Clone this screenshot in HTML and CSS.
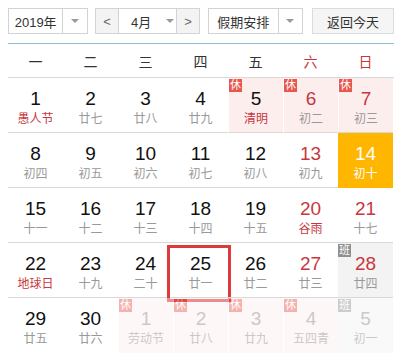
FILE: index.html
```html
<!DOCTYPE html>
<html lang="zh-CN">
<head>
<meta charset="utf-8">
<link rel="stylesheet" href="styles.css">
</head>
<body>
<div class="cal">
  <div class="toolbar">
    <div class="select year"><span class="val">2019年</span><span class="arrow"><i></i></span></div>
    <div class="month">
      <span class="nav">&lt;</span>
      <span class="mval">4月<i></i></span>
      <span class="nav">&gt;</span>
    </div>
    <div class="select holiday"><span class="val">假期安排</span><span class="arrow"><i></i></span></div>
    <div class="today-btn">返回今天</div>
  </div>
  <div class="week">
    <span>一</span><span>二</span><span>三</span><span>四</span><span>五</span><span class="red">六</span><span class="red">日</span>
  </div>
  <div class="grid">
    <div class="cell"><b>1</b><em class="hred">愚人节</em></div>
    <div class="cell"><b>2</b><em>廿七</em></div>
    <div class="cell"><b>3</b><em>廿八</em></div>
    <div class="cell"><b>4</b><em>廿九</em></div>
    <div class="cell rest"><span class="badge">休</span><b>5</b><em class="hred">清明</em></div>
    <div class="cell rest"><span class="badge">休</span><b class="red">6</b><em>初二</em></div>
    <div class="cell rest"><span class="badge">休</span><b class="red">7</b><em>初三</em></div>

    <div class="cell"><b>8</b><em>初四</em></div>
    <div class="cell"><b>9</b><em>初五</em></div>
    <div class="cell"><b>10</b><em>初六</em></div>
    <div class="cell"><b>11</b><em>初七</em></div>
    <div class="cell"><b>12</b><em>初八</em></div>
    <div class="cell"><b class="red">13</b><em>初九</em></div>
    <div class="cell sel"><b>14</b><em>初十</em></div>

    <div class="cell"><b>15</b><em>十一</em></div>
    <div class="cell"><b>16</b><em>十二</em></div>
    <div class="cell"><b>17</b><em>十三</em></div>
    <div class="cell"><b>18</b><em>十四</em></div>
    <div class="cell"><b>19</b><em>十五</em></div>
    <div class="cell"><b class="red">20</b><em class="hred">谷雨</em></div>
    <div class="cell"><b class="red">21</b><em>十七</em></div>

    <div class="cell"><b>22</b><em class="hred">地球日</em></div>
    <div class="cell"><b>23</b><em>十九</em></div>
    <div class="cell"><b>24</b><em>二十</em></div>
    <div class="cell today"><b>25</b><em>廿一</em></div>
    <div class="cell"><b>26</b><em>廿二</em></div>
    <div class="cell"><b class="red">27</b><em>廿三</em></div>
    <div class="cell work"><span class="badge grey">班</span><b class="red">28</b><em>廿四</em></div>

    <div class="cell last"><b>29</b><em>廿五</em></div>
    <div class="cell last"><b>30</b><em>廿六</em></div>
    <div class="cell last rest next"><span class="badge">休</span><b>1</b><em>劳动节</em></div>
    <div class="cell last rest next"><span class="badge">休</span><b>2</b><em>廿八</em></div>
    <div class="cell last rest next"><span class="badge">休</span><b>3</b><em>廿九</em></div>
    <div class="cell last rest next"><span class="badge">休</span><b>4</b><em>五四青</em></div>
    <div class="cell last work next"><span class="badge grey">班</span><b>5</b><em>初一</em></div>
  </div>
</div>
</body>
</html>
```

FILE: styles.css
```css
* { box-sizing: border-box; }
html, body { margin: 0; padding: 0; background: #fff; }
body {
  font-family: "Liberation Sans", "Noto Sans CJK SC", sans-serif;
  color: #333;
}
.cal { padding: 8px; width: 402px; }

.toolbar {
  display: flex;
  align-items: center;
  height: 26px;
  font-size: 13px;
}
.select {
  display: flex;
  height: 26px;
  border: 1px solid #d3d3d3;
  background: #fff;
}
.select .val {
  display: flex;
  align-items: center;
  justify-content: center;
  border-right: 1px solid #d3d3d3;
}
.select .arrow {
  width: 24px;
  display: flex;
  align-items: center;
  justify-content: center;
}
i {
  display: inline-block;
  width: 0; height: 0;
  border-left: 4px solid transparent;
  border-right: 4px solid transparent;
  border-top: 4px solid #999;
}
.year { width: 80px; }
.year .val { width: 55px; }
.month {
  display: flex;
  margin-left: 7px;
  height: 26px;
  border: 1px solid #d3d3d3;
  width: 105px;
}
.month .nav {
  width: 22px;
  background: #f3f3f3;
  display: flex;
  align-items: center;
  justify-content: center;
  color: #666;
  font-size: 13px;
}
.month .mval {
  flex: 1;
  border-left: 1px solid #d3d3d3;
  border-right: 1px solid #d3d3d3;
  display: flex;
  align-items: center;
  padding-left: 12px;
  gap: 15px;
  background: #fff;
}
.holiday { width: 95px; margin-left: 8px; }
.holiday .val { width: 71px; }
.today-btn {
  margin-left: 9px;
  width: 82px;
  height: 26px;
  border: 1px solid #dcdcdc;
  background: #f5f5f5;
  display: flex;
  align-items: center;
  justify-content: center;
}

.week {
  margin-top: 9px;
  border-top: 1px solid #8ec0d4;
  border-bottom: 1px solid #d9d9d9;
  height: 35px;
  display: grid;
  grid-template-columns: repeat(7, 55px);
  align-items: center;
  font-size: 14px;
  color: #333;
}
.week span { text-align: center; }
.week .red { color: #c8373e; }

.grid {
  position: relative;
  display: grid;
  grid-template-columns: repeat(7, 55px);
  grid-auto-rows: 55px;
}
.cell {
  position: relative;
  border-bottom: 1px solid #d9d9d9;
  display: flex;
  flex-direction: column;
  align-items: center;
  padding-top: 10px;
}
.cell.last { border-bottom: none; }
.cell b {
  font-weight: normal;
  font-size: 19px;
  line-height: 22px;
  color: #111;
  font-family: "Liberation Sans", sans-serif;
}
.cell em {
  font-style: normal;
  font-size: 12px;
  line-height: 17px;
  color: #999;
  margin-top: 1px;
}
.cell b.red { color: #c8373e; }
.cell em.hred { color: #c8373e; }
.rest { background: #fdeeee; border-left: 1px solid #fff; }
.work { background: #f3f3f3; }
.badge {
  position: absolute;
  left: 0;
  top: 1px;
  width: 13px;
  height: 13px;
  background: #e8564e;
  color: #fff;
  font-size: 11px;
  line-height: 13px;
  text-align: center;
}
.badge.grey { background: #8f8f8f; }
.sel { background: #ffb600; border-bottom-color: #ffb600; }
.sel b, .sel em { color: #fff; }
.today::after {
  content: "";
  position: absolute;
  left: -6px;
  top: 2px;
  width: 58px;
  height: 51px;
  border: 3px solid #dd3b3b;
}
.next { opacity: 0.45; }
.next b, .next em { color: #888; }
```
